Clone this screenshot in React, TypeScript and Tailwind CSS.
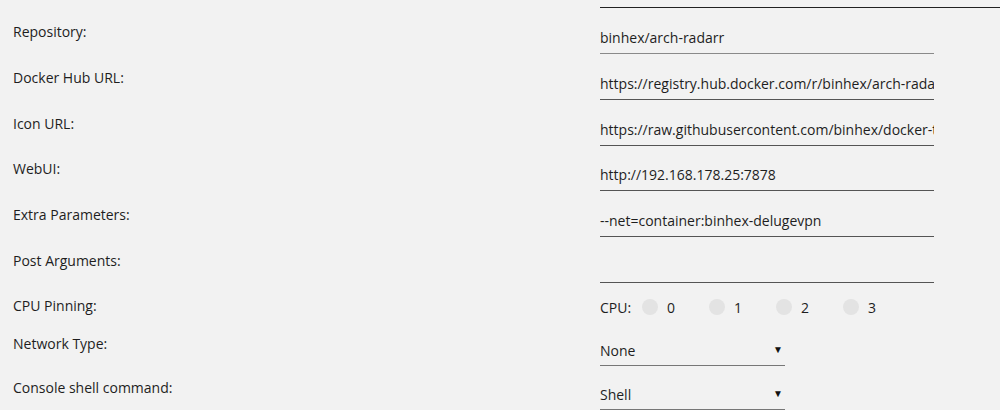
import * as React from 'react';

const rows = [
    { label: 'Repository:', value: 'binhex/arch-radarr', h: 'h-[46px]', line: 'border-[#8a8a8a]' },
    { label: 'Docker Hub URL:', value: 'https://registry.hub.docker.com/r/binhex/arch-radarr/', h: 'h-[46px]', line: 'border-[#555]' },
    { label: 'Icon URL:', value: 'https://raw.githubusercontent.com/binhex/docker-templates/master/binhex/images/radarr-icon.png', h: 'h-[45px]', line: 'border-[#555]' },
    { label: 'WebUI:', value: 'http://192.168.178.25:7878', h: 'h-[46px]', line: 'border-[#555]' },
    { label: 'Extra Parameters:', value: '--net=container:binhex-delugevpn', h: 'h-[46px]', line: 'border-[#555]' },
    { label: 'Post Arguments:', value: '', h: 'h-[46px]', line: 'border-[#555]' },
];

function Label({ children, pad = 'pt-[14px]' }: { children: React.ReactNode; pad?: string }) {
    return <div className={`w-[600px] shrink-0 pl-[13px] leading-[20px] ${pad}`}>{children}</div>;
}

function Select({ value }: { value: string }) {
    return (
        <div className="mt-[16px] h-[30px] w-[185px] border-b border-[#777] flex items-center justify-between pr-[2px]">
            <span className="leading-[26px]">{value}</span>
            <span className="text-[10px] leading-none text-[#111] pb-[3px]">▼</span>
        </div>
    );
}

export default function App() {
    return (
        <div
            className="w-[1000px] h-[410px] overflow-hidden bg-[#f2f2f2] text-[#1e1e1e] text-[14px]"
            style={{ fontFamily: '"Open Sans", "Noto Sans", sans-serif' }}
        >
            {/* tail of the previous, wider field */}
            <div className="h-[8px] ml-[600px] border-b border-[#222]" />

            {rows.map((r) => (
                <div key={r.label} className={`flex ${r.h}`}>
                    <Label>{r.label}</Label>
                    <div className={`mt-[16px] h-[30px] w-[334px] border-b ${r.line} overflow-hidden whitespace-nowrap leading-[28px]`}>
                        {r.value}
                    </div>
                </div>
            ))}

            <div className="flex h-[37px]">
                <Label pad="pt-[13px]">CPU Pinning:</Label>
                <div className="pt-[16px] flex items-center h-[32px]">
                    <span className="w-[42px]">CPU:</span>
                    {['0', '1', '2', '3'].map((n) => (
                        <div key={n} className="w-[67px] flex items-center">
                            <span className="w-[16px] h-[16px] rounded-full bg-[#e3e3e3]" />
                            <span className="ml-[9px]">{n}</span>
                        </div>
                    ))}
                </div>
            </div>

            <div className="flex h-[44px]">
                <Label>Network Type:</Label>
                <Select value="None" />
            </div>

            <div className="flex h-[46px]">
                <Label>Console shell command:</Label>
                <Select value="Shell" />
            </div>
        </div>
    );
}
